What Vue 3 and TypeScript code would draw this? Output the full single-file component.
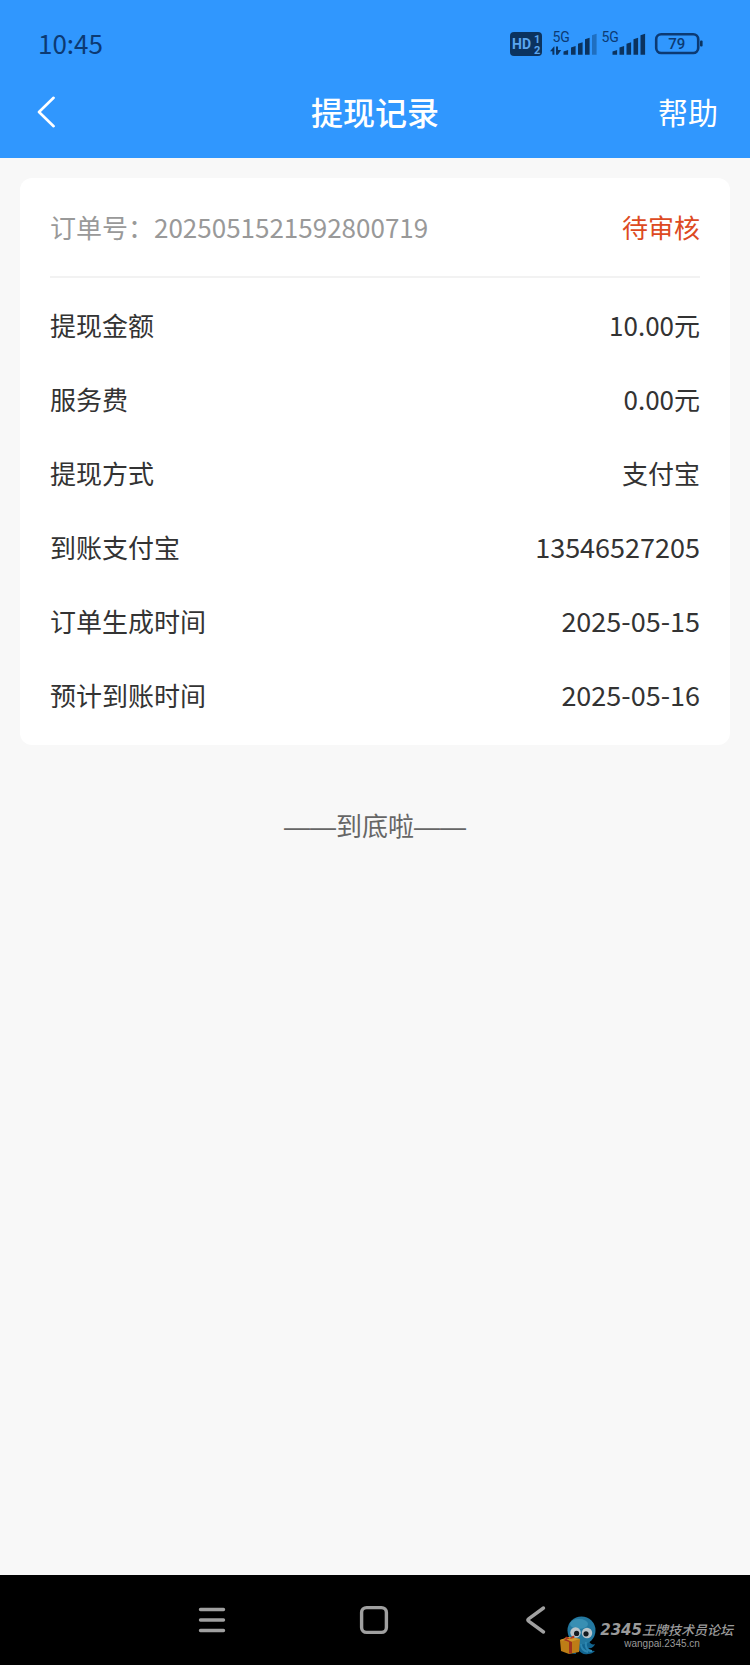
<script setup lang="ts">
interface DetailRow {
  label: string
  value: string
  numeric?: boolean
}

interface SignalBar {
  x: number
  y: number
  faded?: boolean
}

const rows: DetailRow[] = [
  { label: '提现金额', value: '10.00元' },
  { label: '服务费', value: '0.00元' },
  { label: '提现方式', value: '支付宝' },
  { label: '到账支付宝', value: '13546527205', numeric: true },
  { label: '订单生成时间', value: '2025-05-15', numeric: true },
  { label: '预计到账时间', value: '2025-05-16', numeric: true },
]

const bars: SignalBar[] = [
  { x: 53.5, y: 20 },
  { x: 61, y: 16 },
  { x: 68, y: 12.3 },
  { x: 75, y: 7.7 },
  { x: 82, y: 3.7, faded: true },
  { x: 102.5, y: 20 },
  { x: 109.5, y: 16 },
  { x: 116.5, y: 12.3 },
  { x: 123.5, y: 7.7 },
  { x: 130.5, y: 3.7 },
]
</script>

<template>
  <div class="screen">
    <header class="header">
      <div class="status">
        <time class="clock">10:45</time>
        <svg class="status-icons" viewBox="0 -4 194 36" role="img" aria-label="HD 5G 5G 79">
          <rect x="0" y="2" width="32" height="24" rx="4" class="ink" />
          <text x="2" y="18.5" class="hd">HD</text>
          <text x="24" y="12.5" class="hd-num">1</text>
          <text x="24" y="23.5" class="hd-num">2</text>
          <text x="42.5" y="12" class="net">5G</text>
          <text x="91.5" y="12" class="net">5G</text>
          <path class="ink" d="M44.4 16.5v8.2h-2v-3.4H40l4-4.8zM46 16.5h2v8.2h-2zM48 17.5v2.6h3.2L48 24.4z" />
          <path
            v-for="bar in bars"
            :key="bar.x"
            :class="['ink', { faded: bar.faded }]"
            :d="`M${bar.x} ${bar.y + 1.5}l4.6 -1.5V24.8h-4.6z`"
          />
          <rect x="146.2" y="4.2" width="42" height="18.8" rx="5" class="battery" />
          <rect x="190" y="10.5" width="2.6" height="6" rx="1" class="ink" />
          <text x="166.8" y="19" class="level">79</text>
        </svg>
      </div>
      <div class="titlebar">
        <button class="back" type="button" aria-label="返回">
          <svg viewBox="0 0 20 32" class="back-icon"><path d="M17.6 1.8 3 16l14.6 14.2" /></svg>
        </button>
        <h1 class="title">提现记录</h1>
        <a class="help" href="#">帮助</a>
      </div>
    </header>

    <main class="content">
      <section class="card">
        <div class="order">
          <span class="order-no">订单号：2025051521592800719</span>
          <span class="state">待审核</span>
        </div>
        <dl class="details">
          <div v-for="row in rows" :key="row.label" class="row">
            <dt>{{ row.label }}</dt>
            <dd :class="{ numeric: row.numeric }">{{ row.value }}</dd>
          </div>
        </dl>
      </section>
      <p class="end">——到底啦——</p>
    </main>

    <nav class="navbar">
      <button type="button" class="nav-btn" aria-label="菜单">
        <svg viewBox="0 0 32 32"><path d="M4.5 5.5h23M4.5 16h23M4.5 26.5h23" /></svg>
      </button>
      <button type="button" class="nav-btn" aria-label="主页">
        <svg viewBox="0 0 32 32"><rect x="3.6" y="3.6" width="24.8" height="24.8" rx="5" /></svg>
      </button>
      <button type="button" class="nav-btn" aria-label="后退">
        <svg viewBox="0 0 32 32"><path d="M23.5 4 8.6 14.8q-1.6 1.2 0 2.4L23.5 28" /></svg>
      </button>

      <div class="mark">
        <svg class="mascot" viewBox="0 0 40 40" aria-hidden="true">
          <path d="M13 20c-4 4-6 9-3 14 2 3 5 4 8 4-1-2 0-4 2-5 2 4 6 6 10 5 3 0 5-1 7-3-4 0-6-1-7-3 3 1 6-1 7-4-2 1-5 0-6-3l-3-6z" fill="#12648f" />
          <circle cx="23.5" cy="14.5" r="14" fill="#2378a0" />
          <ellipse cx="21" cy="8" rx="9" ry="5" fill="#398fb3" />
          <path d="M28 26c-1 5 1 9 6 9M23 28c0 4 3 7 7 8" fill="none" stroke="#2c86b0" stroke-width="2" />
          <circle cx="17.5" cy="16.5" r="5.2" fill="#b9c3c8" />
          <circle cx="29" cy="17" r="5.2" fill="#b9c3c8" />
          <circle cx="18.6" cy="17.4" r="2.6" fill="#141a20" />
          <circle cx="28" cy="17.8" r="2.6" fill="#141a20" />
          <path d="m2 24 9-3 11 2-1 13-10 2-8-3z" fill="#bd7d16" />
          <path d="m2 24 9-3 11 2-10 3z" fill="#d29a2c" />
          <path d="m5 24 3-1 6 3v11l-3 .6V26z" fill="#a2331d" />
          <path d="M12 23c-4-4-6-2-4 0zM12 23c2-5 6-3 4-1z" fill="#b23a20" />
        </svg>
        <div class="mark-text">
          <div class="mark-name"><span class="mark-num">2345</span>王牌技术员论坛</div>
          <div class="mark-url">wangpai.2345.cn</div>
        </div>
      </div>
    </nav>
  </div>
</template>

<style>
body {
  margin: 0;
}
</style>

<style scoped>
.screen {
  display: flex;
  flex-direction: column;
  min-height: 100vh;
  background: #f8f8f8;
  color: #333;
  font-family: "Noto Sans CJK SC", sans-serif;
  font-size: 26px;
  line-height: 36px;
}

.header {
  background: #3097fe;
}

.status {
  display: flex;
  align-items: center;
  justify-content: space-between;
  height: 48px;
  padding: 20px 46px 0 38px;
}

.clock {
  padding-bottom: 2px;
  color: #0c3a73;
}

.status-icons {
  width: 194px;
  height: 36px;
  font-family: Roboto, sans-serif;
}

.ink {
  fill: #0b335f;
}

.faded {
  fill: #1f6fc0;
}

.hd {
  fill: #5aa5ee;
  font-size: 14px;
  font-weight: 700;
}

.hd-num {
  fill: #5aa5ee;
  font-size: 11px;
  font-weight: 700;
}

.net {
  fill: #0c3a73;
  font-size: 14px;
}

.battery {
  fill: none;
  stroke: #0c3a73;
  stroke-width: 2.6;
}

.level {
  fill: #0c3a73;
  font-size: 15px;
  font-weight: 500;
  text-anchor: middle;
}

.titlebar {
  display: grid;
  grid-template-columns: 1fr auto 1fr;
  align-items: center;
  height: 86px;
  padding: 0 32px 4px;
  color: #fff;
}

.back {
  display: flex;
  justify-self: start;
  padding: 2px 4px 0;
  border: 0;
  background: none;
  cursor: pointer;
}

.back-icon {
  width: 20px;
  height: 32px;
  fill: none;
  stroke: #fff;
  stroke-width: 2.6;
  stroke-linecap: round;
  stroke-linejoin: round;
}

.title {
  margin: 0;
  font-size: 32px;
  font-weight: 500;
}

.help {
  justify-self: end;
  color: #fff;
  font-size: 30px;
  text-decoration: none;
}

.content {
  flex: 1;
  padding: 20px;
}

.card {
  padding: 0 30px 13px;
  border-radius: 12px;
  background: #fff;
}

.order {
  display: flex;
  align-items: center;
  justify-content: space-between;
  height: 98px;
  border-bottom: 2px solid #f2f2f2;
  color: #999;
}

.state {
  color: #dd4a22;
}

.details {
  margin: 0;
  padding-top: 10px;
}

.row {
  display: flex;
  align-items: center;
  justify-content: space-between;
  height: 74px;
}

.row dd {
  margin: 0;
}

.row .numeric {
  font-size: 27px;
}

.end {
  margin: 64px 0 0;
  color: #666;
  font-family: "Liberation Sans", "Noto Sans CJK SC", sans-serif;
  text-align: center;
}

.navbar {
  position: relative;
  display: flex;
  align-items: center;
  justify-content: center;
  gap: 98px;
  height: 90px;
  padding-right: 2px;
  background: #000;
}

.nav-btn {
  display: flex;
  justify-content: center;
  width: 64px;
  padding: 16px 0;
  border: 0;
  background: none;
  cursor: pointer;
}

.nav-btn svg {
  width: 32px;
  height: 32px;
  fill: none;
  stroke: #a0a0a0;
  stroke-width: 3.4;
  stroke-linecap: round;
  stroke-linejoin: round;
}

.mark {
  position: absolute;
  right: 17px;
  bottom: 9px;
  display: flex;
  align-items: center;
  gap: 2px;
}

.mascot {
  width: 40px;
  height: 40px;
}

.mark-text {
  color: #9a9a9a;
}

.mark-name {
  font-size: 13px;
  font-style: italic;
  font-weight: 500;
  line-height: 16px;
  white-space: nowrap;
}

.mark-num {
  font-family: "DejaVu Sans", sans-serif;
  font-size: 15px;
  font-weight: 700;
}

.mark-url {
  padding-left: 24px;
  font-family: "Liberation Sans", sans-serif;
  font-size: 10px;
  line-height: 12px;
}
</style>
